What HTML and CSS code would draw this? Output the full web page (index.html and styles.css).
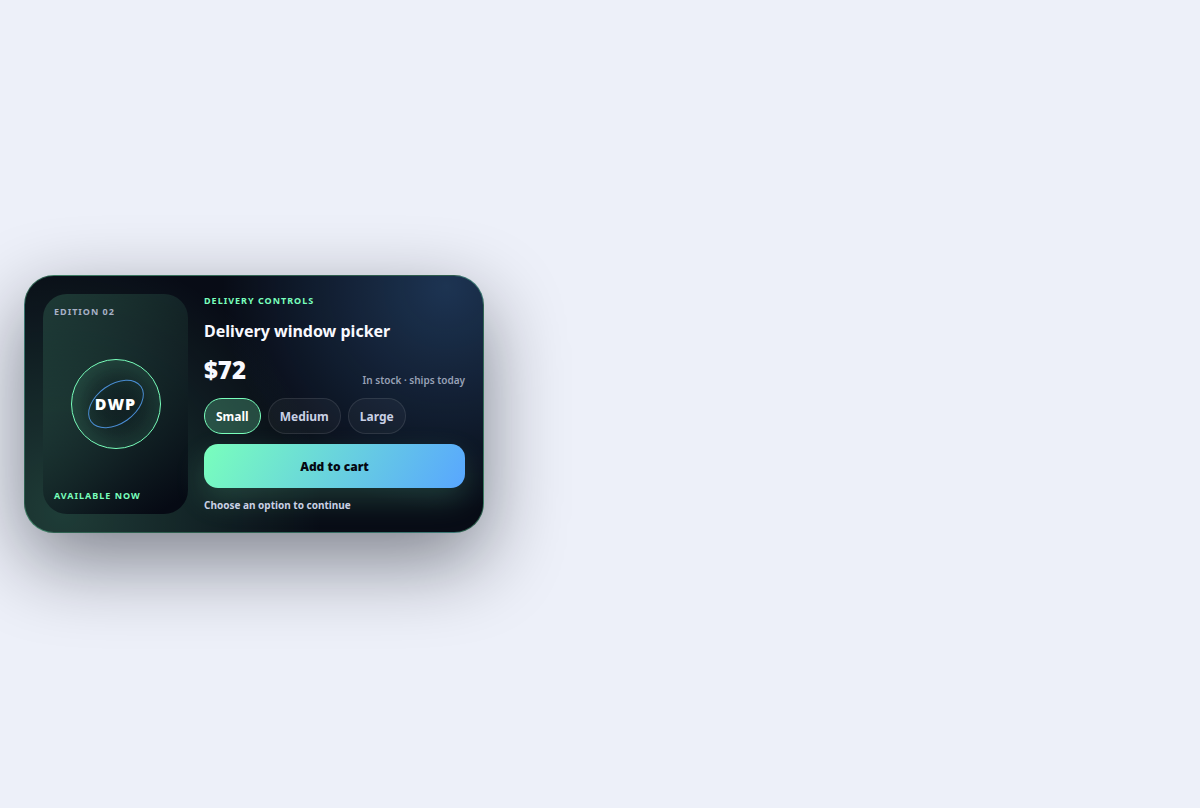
FILE: index.html
```html
<!DOCTYPE html>
<html lang="en">
<head>
  <meta charset="UTF-8" />
  <meta name="viewport" content="width=device-width, initial-scale=1.0"/>
  <title>Delivery window picker</title>
  <link rel="stylesheet" href="styles.css">
</head>
<body>
  <article class="card">
    <div class="art">
      <span class="edition">Edition 02</span>
      <div class="orb">
        <span class="orbit"></span>
        <strong>DWP</strong>
      </div>
      <span class="available">Available now</span>
    </div>

    <div class="details">
      <p class="eyebrow">Delivery controls</p>
      <h1>Delivery window picker</h1>
      <div class="price-row">
        <strong class="price">$72</strong>
        <span class="stock">In stock · ships today</span>
      </div>
      <div class="options" role="group" aria-label="Size">
        <button type="button" class="option selected" aria-pressed="true">Small</button>
        <button type="button" class="option" aria-pressed="false">Medium</button>
        <button type="button" class="option" aria-pressed="false">Large</button>
      </div>
      <button type="button" class="add">Add to cart</button>
      <p class="status">Choose an option to continue</p>
    </div>
  </article>
</body>
</html>
```

FILE: styles.css
```css
* {
  box-sizing: border-box;
}

body {
  background-color: #edf0f9;
  color: #f8f9ff;
  font-family: "Noto Sans", "Open Sans", sans-serif;
  margin: 0;
  padding: 24px;
  display: flex;
  align-items: center;
  min-height: 100vh;
}

h1,
p {
  margin: 0;
}

button {
  font-family: inherit;
  cursor: pointer;
}

.card {
  width: 100%;
  max-width: 460px;
  display: grid;
  grid-template-columns: 1fr 1.8fr;
  gap: 16px;
  padding: 18px;
  border: 1px solid rgba(121, 255, 188, 0.34);
  border-radius: 30px;
  background:
    radial-gradient(circle at 92% 4%, rgba(88, 166, 255, 0.26), transparent 46%),
    radial-gradient(circle at 8% 92%, rgba(121, 255, 188, 0.2), transparent 54%),
    #080c16;
  box-shadow: 0 28px 80px rgba(5, 8, 18, 0.48);
}

.art {
  display: flex;
  flex-direction: column;
  justify-content: space-between;
  min-height: 220px;
  padding: 11px;
  border-radius: 24px;
  background: linear-gradient(150deg, rgba(121, 255, 188, 0.16), rgba(121, 255, 188, 0.06) 40%, #060a14 94%);
}

.edition,
.available,
.eyebrow {
  font-size: 9px;
  line-height: 14px;
  font-weight: 700;
  letter-spacing: 1px;
  text-transform: uppercase;
}

.edition {
  color: #a7b0c5;
}

.available,
.eyebrow {
  color: #79ffbc;
}

.orb {
  position: relative;
  display: grid;
  place-items: center;
  align-self: center;
  width: 90px;
  height: 90px;
  border: 1px solid #79ffbc;
  border-radius: 50%;
  background: radial-gradient(circle, rgba(5, 8, 18, 0.3), transparent 60%);
  box-shadow: inset 0 0 30px rgba(121, 255, 188, 0.16);
}

.orb strong {
  position: relative;
  font-size: 16px;
  line-height: 20px;
  font-weight: 900;
  letter-spacing: 1px;
  color: #fff;
}

.orbit {
  position: absolute;
  inset: 24px 13px;
  border: 1px solid rgba(88, 166, 255, 0.8);
  border-radius: 50%;
  transform: rotate(-35deg);
}

.details {
  display: flex;
  flex-direction: column;
  min-width: 0;
}

h1 {
  margin-top: 11px;
  font-size: 16px;
  line-height: 24px;
  font-weight: 700;
}

.price-row {
  display: flex;
  align-items: flex-end;
  justify-content: space-between;
  margin-top: 10px;
}

.price {
  font-size: 24px;
  line-height: 34px;
  font-weight: 900;
}

.stock {
  font-size: 10px;
  line-height: 14px;
  font-weight: 600;
  color: #98a1b6;
}

.options {
  display: flex;
  gap: 7px;
  margin-top: 11px;
}

.option {
  height: 36px;
  padding: 0 11px;
  border: 1px solid rgba(255, 255, 255, 0.1);
  border-radius: 18px;
  background-color: rgba(255, 255, 255, 0.04);
  color: #c9d0e4;
  font-size: 12px;
  font-weight: 700;
}

.option.selected {
  border-color: #79ffbc;
  background-color: rgba(121, 255, 188, 0.24);
  color: #fff;
}

.add {
  height: 44px;
  margin-top: 10px;
  border: none;
  border-radius: 14px;
  background: linear-gradient(120deg, #79ffbc, #58a6ff);
  box-shadow: 0 12px 30px rgba(121, 255, 188, 0.18);
  color: #050812;
  font-size: 12px;
  font-weight: 900;
}

.status {
  margin-top: 9px;
  font-size: 10px;
  line-height: 16px;
  font-weight: 700;
  color: #c9d0e4;
}
```
